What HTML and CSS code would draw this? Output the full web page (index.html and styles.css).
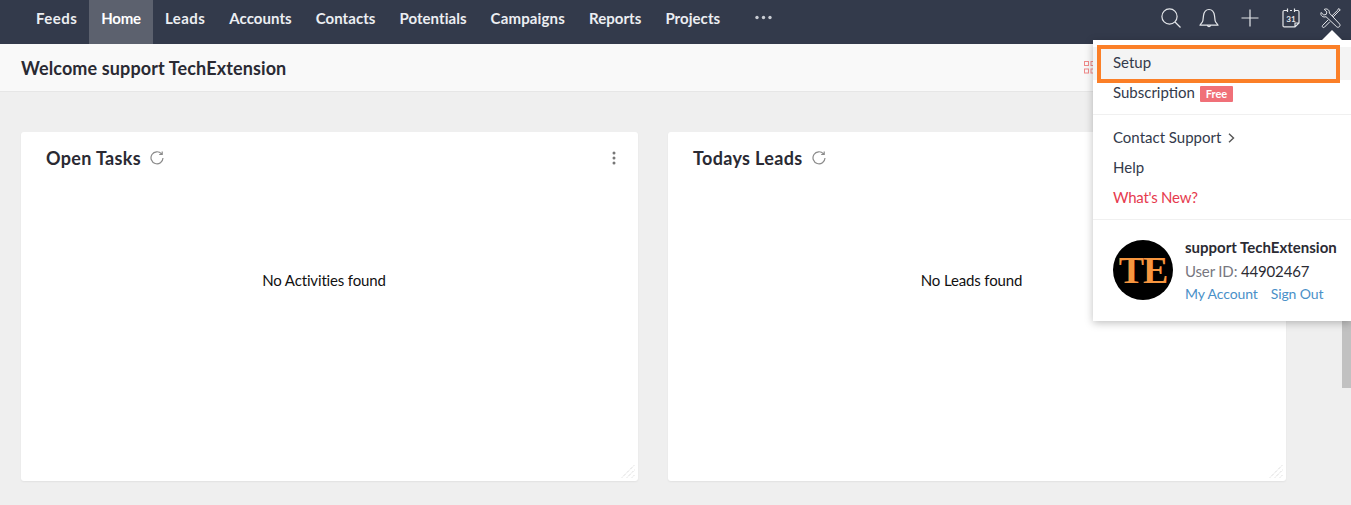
FILE: index.html
```html
<!DOCTYPE html>
<html lang="en">
<head>
<meta charset="utf-8">
<title>Home</title>
<link rel="stylesheet" href="styles.css">
</head>
<body>
<nav class="topbar">
  <ul class="tabs">
    <li class="tab tab-wide">Feeds</li>
    <li class="tab tab-active tab-tight">Home</li>
    <li class="tab tab-wide">Leads</li>
    <li class="tab">Accounts</li>
    <li class="tab">Contacts</li>
    <li class="tab">Potentials</li>
    <li class="tab tab-loose">Campaigns</li>
    <li class="tab">Reports</li>
    <li class="tab">Projects</li>
    <li class="tab tab-more"><svg width="17" height="5" viewBox="0 0 17 5"><circle cx="2" cy="2.5" r="1.7"/><circle cx="8.5" cy="2.5" r="1.7"/><circle cx="15" cy="2.5" r="1.7"/></svg></li>
  </ul>
  <div class="tools">
    <svg class="tool" width="20" height="20" viewBox="0 0 20 20"><circle cx="8.5" cy="8.5" r="7.6"/><path d="M14 14l5.5 5.5"/></svg>
    <svg class="tool tool-bell" width="20" height="20" viewBox="0 0 20 20"><path d="M1 17.2c0-1 2.600-2.600 2.900-4.600l.6-5C5 3.900 7.200 1.500 10 1.500s5 2.400 5.500 6.100l.6 5c.3 2 2.900 3.600 2.900 4.600zM8.500 17.500c.3 1.500 2.700 1.500 3 0"/></svg>
    <svg class="tool tool-plus" width="18" height="18" viewBox="0 0 18 18"><path d="M9 0.500v17M0.500 9h17"/></svg>
    <svg class="tool tool-cal" width="18" height="20" viewBox="0 0 18 20"><path d="M5 2.500H2.200Q1 2.500 1 3.700v14q0 1.200 1.200 1.200H13l4-4V3.700q0-1.200-1.200-1.200H13M8 2.500h2M5.500 .5v3.500M12.500 .5v3.500M13 19v-4h4"/><text class="cal-day" x="9" y="13.500">31</text></svg>
    <svg class="tool tool-wrench" width="21" height="21" viewBox="0 0 21 21"><path d="M1 4.500L3.800 7l2.400-.6.700-2.500L4.200 1.400C6.500 .2 9.800 1.500 9.300 5L19.600 16c1.500 2-1.200 4.300-2.900 2.800L6 8.700C3 9.800 0 7.500 1 4.500zM12 7.800l5.700-5.600.9-1.700 1.700 1.400-1.500 1.200-5.500 5.700M8.200 11.800l-5.700 5.700c-.8 1.200.6 2.700 1.800 1.800l5.600-5.600"/></svg>
  </div>
</nav>

<header class="subbar">
  <h1 class="welcome">Welcome support TechExtension</h1>
  <svg class="grid-icon" width="12" height="13" viewBox="0 0 12 13"><rect x="0.500" y="0.500" width="4" height="4"/><rect x="7" y="0.500" width="4" height="4"/><rect x="0.500" y="8" width="4" height="4"/><rect x="7" y="8" width="4" height="4"/></svg>
</header>

<main class="dashboard">
  <section class="card">
    <div class="card-head">
      <h2 class="card-title">Open Tasks</h2>
      <svg class="refresh" width="14" height="14" viewBox="0 0 14 14"><path d="M11.500 2.800A6 6 0 1 0 13 7M12.200 .5v3h-3"/></svg>
      <svg class="kebab" width="4" height="14" viewBox="0 0 4 14"><circle cx="2" cy="2" r="1.500"/><circle cx="2" cy="7" r="1.500"/><circle cx="2" cy="12" r="1.500"/></svg>
    </div>
    <p class="empty">No Activities found</p>
    <svg class="grip" width="14" height="14" viewBox="0 0 14 14"><path d="M1 13.500L13.500 1M6 13.500l7.500-7.500M11 13.500l2.500-2.500"/></svg>
  </section>
  <section class="card">
    <div class="card-head">
      <h2 class="card-title">Todays Leads</h2>
      <svg class="refresh" width="14" height="14" viewBox="0 0 14 14"><path d="M11.500 2.800A6 6 0 1 0 13 7M12.200 .5v3h-3"/></svg>
    </div>
    <p class="empty">No Leads found</p>
    <svg class="grip" width="14" height="14" viewBox="0 0 14 14"><path d="M1 13.500L13.500 1M6 13.500l7.500-7.500M11 13.500l2.500-2.500"/></svg>
  </section>
</main>

<div class="scroll-thumb"></div>

<aside class="menu">
  <span class="menu-notch"></span>
  <ul class="menu-group">
    <li class="menu-item menu-item-setup">Setup</li>
    <li class="menu-item menu-item-sub">Subscription <span class="badge">Free</span></li>
  </ul>
  <ul class="menu-group menu-group-mid">
    <li class="menu-item">Contact Support <svg class="chev" width="7" height="10" viewBox="0 0 7 10"><path d="M1 .8l4.500 4.200L1 9.200"/></svg></li>
    <li class="menu-item">Help</li>
    <li class="menu-item menu-item-new">What's New?</li>
  </ul>
  <div class="account">
    <div class="avatar"><span class="avatar-text">TE</span></div>
    <div class="account-info">
      <div class="account-name">support TechExtension</div>
      <div class="account-id"><span class="id-label">User ID:</span> 44902467</div>
      <div class="account-links"><a class="account-link">My Account</a><a class="account-link">Sign Out</a></div>
    </div>
  </div>
  <div class="setup-mark"></div>
</aside>
</body>
</html>
```
FILE: styles.css
```css
* { box-sizing: border-box; }
html, body { margin: 0; padding: 0; height: 505px; overflow: hidden; }
body { background: #efefef; font-family: Lato, "Open Sans", sans-serif; color: #222; position: relative; }
ul { list-style: none; margin: 0; padding: 0; }
h1, h2, p { margin: 0; }

.topbar { height: 44px; background: #333a4b; display: flex; justify-content: space-between; padding-left: 24px; }
.tabs { display: flex; }
.tab { padding: 0 12px; line-height: 36px; font-size: 15px; font-weight: 700; letter-spacing: .05px; color: #eceef2; }
.tab-wide { letter-spacing: .45px; }
.tab-tight { letter-spacing: -.2px; }
.tab-loose { letter-spacing: .15px; }
.tab-active { background: #5c616e; color: #fff; }
.tab-more { padding: 0 0 0 23px; display: flex; align-items: center; height: 35px; }
.tab-more svg { fill: #c9ccd3; }
.tools { display: flex; align-items: center; padding: 0 10px 8px 0; }
.tool { fill: none; stroke: #e4e6ea; stroke-width: 1.2; display: block; }
.tool-bell { margin-left: 18px; }
.tool-plus { margin-left: 22px; }
.tool-cal { margin-left: 23px; }
.tool-wrench { margin-left: 20px; stroke-width: 1; }
.cal-day { font-family: Lato, sans-serif; font-size: 8px; font-weight: 700; text-anchor: middle; fill: #e4e6ea; stroke: none; }

.subbar { height: 48px; background: #f9f9f9; border-bottom: 1px solid #e6e6e6; display: flex; align-items: center; justify-content: space-between; padding: 0 255px 0 21px; }
.welcome { font-size: 18px; font-weight: 700; letter-spacing: .12px; color: #2a2a33; }
.grid-icon { fill: none; stroke: #f08a8a; stroke-width: 1; }

.dashboard { display: grid; grid-template-columns: 617px 618px; gap: 30px; padding: 40px 0 0 21px; }
.card { height: 349px; background: #fff; border-radius: 3px; box-shadow: 0 1px 2px rgba(0,0,0,.06); position: relative; }
.card-head { display: flex; align-items: center; gap: 9px; padding: 15px 22px 0 25px; }
.card-title { font-size: 18px; font-weight: 700; letter-spacing: .35px; color: #2a2a33; }
.refresh { fill: none; stroke: #8a8a8a; stroke-width: 1.2; }
.kebab { fill: #777; margin-left: auto; }
.empty { text-align: center; font-size: 15px; letter-spacing: -.15px; color: #111; margin-top: 102px; padding-right: 11px; }
.grip { position: absolute; right: 3px; bottom: 3px; fill: none; stroke: #ccc; stroke-width: 1; stroke-dasharray: 1 1; }

.scroll-thumb { position: absolute; right: 0; top: 321px; width: 9px; height: 67px; background: #c1c1c1; }

.menu { position: absolute; left: 1093px; top: 40px; width: 258px; height: 281px; background: #fff; box-shadow: 0 2px 8px rgba(0,0,0,.25); font-size: 15px; color: #333a4b; }
.menu-notch { position: absolute; right: 9px; top: -10px; border: 10px solid transparent; border-top: 0; border-bottom-color: #fff; }
.menu-group { padding-top: 7px; border-bottom: 1px solid #f0f0f0; height: 75px; }
.menu-group-mid { padding-top: 7px; height: 105px; }
.menu-item { height: 30px; line-height: 30px; padding-left: 20px; }
.menu-item-setup { background: #f4f4f4; height: 33px; line-height: 30px; }
.menu-item-sub { line-height: 24px; }
.menu-item-new { color: #e63a4e; letter-spacing: -.25px; }
.badge { display: inline-block; background: #f07078; color: #fff; font-size: 11px; font-weight: 700; line-height: 16px; padding: 0 6px; border-radius: 1px; margin-left: 1px; vertical-align: 0; }
.chev { fill: none; stroke: #555; stroke-width: 1.4; margin-left: 3px; }
.setup-mark { position: absolute; left: 4px; top: 5px; width: 243px; height: 38px; border: 4px solid #fb7f27; }

.account { display: flex; gap: 12px; padding: 20px 0 0 20px; }
.avatar { width: 60px; height: 60px; border-radius: 50%; background: #000; display: flex; align-items: center; justify-content: center; }
.avatar-text { font-family: "Liberation Serif", serif; font-weight: 700; font-size: 38px; color: #f7963f; letter-spacing: -1px; }
.account-info { display: flex; flex-direction: column; }
.account-name { font-size: 15px; font-weight: 700; color: #2b2b33; line-height: 16px; margin-top: -1px; }
.account-id { font-size: 15px; letter-spacing: -.15px; color: #2b2b33; line-height: 18px; margin-top: 7px; }
.id-label { color: #77777f; }
.account-links { display: flex; gap: 13px; font-size: 14px; margin-top: 5px; line-height: 18px; letter-spacing: -.1px; }
.account-link { color: #4a90c8; }
```
